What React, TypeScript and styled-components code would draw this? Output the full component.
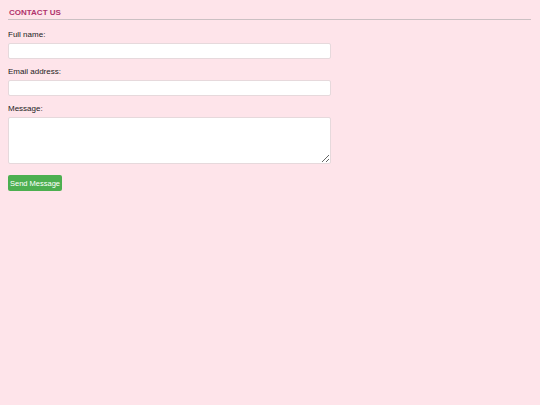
import React from "react";
import styled, { createGlobalStyle } from "styled-components";

const GlobalStyle = createGlobalStyle`
  html, body {
    margin: 0;
    padding: 0;
    background: #fee4ea;
    font-family: "Liberation Sans", Arial, sans-serif;
  }
`;

const Page = styled.div`
  padding: 8px 9px 8px 8px;
`;

const Heading = styled.h2`
  margin: 0;
  padding: 0 1px 2px;
  font-size: 8px;
  line-height: 9px;
  font-weight: bold;
  color: #b0336c;
  text-transform: uppercase;
  border-bottom: 1px solid #cbc0c3;
`;

const Form = styled.form`
  display: flex;
  flex-direction: column;
  padding-top: 10px;
`;

const Field = styled.div`
  display: flex;
  flex-direction: column;
  margin-bottom: 8px;
`;

const Label = styled.label`
  font-size: 8px;
  line-height: 9px;
  color: #222;
  margin-bottom: 4px;
`;

const Input = styled.input`
  box-sizing: border-box;
  width: 323px;
  height: 16px;
  border: 1px solid #e6d9dc;
  border-radius: 2px;
  background: #fff;
  padding: 0 4px;
  font-size: 8px;
`;

const TextArea = styled.textarea`
  box-sizing: border-box;
  width: 323px;
  height: 47px;
  border: 1px solid #e6d9dc;
  border-radius: 2px;
  background: #fff;
  padding: 3px 4px;
  font-size: 8px;
  font-family: inherit;
`;

const Button = styled.button`
  align-self: flex-start;
  width: 54px;
  height: 16px;
  margin-top: 3px;
  padding: 0;
  border: none;
  border-radius: 2px;
  background: #4caf50;
  color: #fff;
  font-family: inherit;
  font-size: 7.5px;
`;

export default function App() {
  return (
    <>
      <GlobalStyle />
      <Page>
        <Heading>Contact Us</Heading>
        <Form>
          <Field>
            <Label>Full name:</Label>
            <Input type="text" />
          </Field>
          <Field>
            <Label>Email address:</Label>
            <Input type="email" />
          </Field>
          <Field>
            <Label>Message:</Label>
            <TextArea />
          </Field>
          <Button type="button">Send Message</Button>
        </Form>
      </Page>
    </>
  );
}
